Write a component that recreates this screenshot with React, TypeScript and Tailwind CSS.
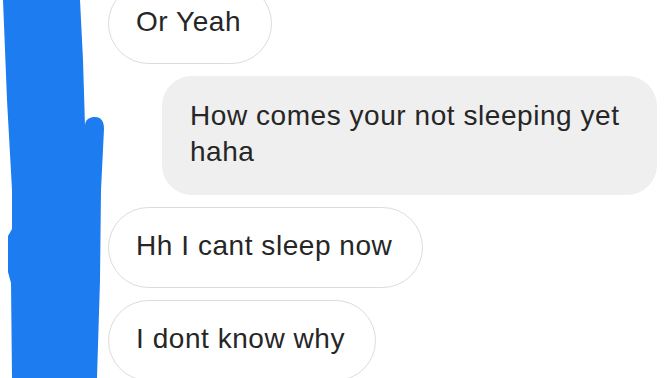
import React from 'react';

type Msg = { id: number; text: string; mine: boolean };

const MESSAGES: Msg[] = [
  { id: 1, text: 'Or Yeah', mine: false },
  { id: 2, text: 'How comes your not sleeping yet haha', mine: true },
  { id: 3, text: 'Hh I cant sleep now', mine: false },
  { id: 4, text: 'I dont know why', mine: false },
];

const Scribble = () => (
  <svg className="absolute left-0 top-0" width="110" height="378" viewBox="0 0 110 378">
    <path
      d="M3 0 L80 0 L83 60 L85 126 C85 119 90 117 95 117 C101 117 104 121 104 129 L101 190 L100 280 L97 378 L12 378 L11 283 L8 272 L8 236 L12 229 L12 190 L7 100 Z"
      fill="#1d7cf0"
    />
  </svg>
);

const Bubble = ({ m }: { m: Msg }) =>
  m.mine ? (
    <div className="flex justify-end pr-[15px]">
      <div className="w-[495px] rounded-[30px] bg-[#efefef] pl-[28px] pr-[16px] pt-[22px] pb-[25px] text-[28px] leading-[36px] tracking-[0.55px] text-[#262626]">
        {m.text}
      </div>
    </div>
  ) : (
    <div className="flex pl-[108px]">
      <div className="rounded-full border-[1.5px] border-[#dcdcdc] bg-white pl-[27px] pr-[30px] pt-[20px] pb-[23px] text-[28px] leading-[36px] tracking-[0.55px] text-[#262626]">
        {m.text}
      </div>
    </div>
  );

export default function App() {
  return (
    <div
      className="relative h-[378px] w-[672px] overflow-hidden bg-white"
      style={{ fontFamily: '"Liberation Sans", Arial, sans-serif' }}
    >
      <div className="-mt-[17px] flex flex-col gap-[12px]">
        {MESSAGES.map((m) => (
          <Bubble key={m.id} m={m} />
        ))}
      </div>
      <Scribble />
    </div>
  );
}
